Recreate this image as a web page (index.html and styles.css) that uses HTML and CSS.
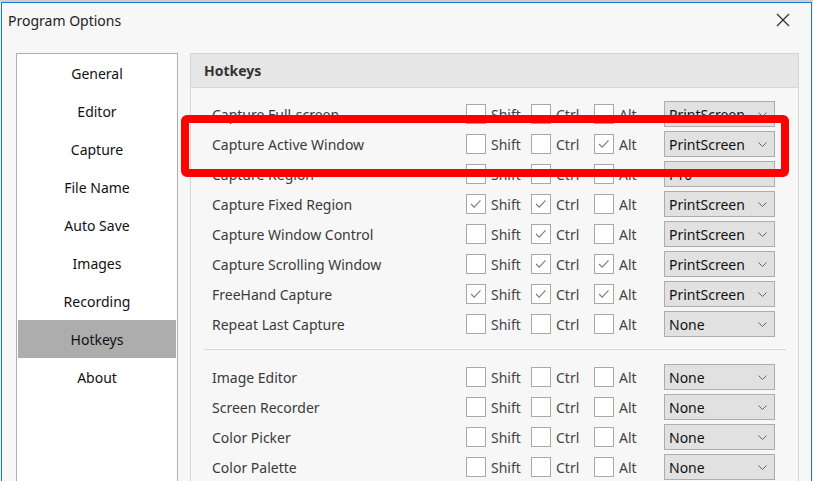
FILE: index.html
```html
<!DOCTYPE html>
<html>
<head>
<meta charset="utf-8">
<link rel="stylesheet" href="styles.css">
</head>
<body>
<div class="strip"></div>
<div class="window">
  <div class="titlebar">
    <span class="title">Program Options</span>
    <svg class="close" width="14" height="14" viewBox="0 0 14 14"><path d="M1 1L13 13M13 1L1 13" stroke="#333" stroke-width="1.3" fill="none"/></svg>
  </div>
  <div class="content">
    <div class="sidebar">
      <div class="nav">General</div>
      <div class="nav">Editor</div>
      <div class="nav">Capture</div>
      <div class="nav">File Name</div>
      <div class="nav">Auto Save</div>
      <div class="nav">Images</div>
      <div class="nav">Recording</div>
      <div class="nav active">Hotkeys</div>
      <div class="nav">About</div>
    </div>
    <div class="panel">
      <div class="panel-head">Hotkeys</div>
      <div class="group">
        <div class="row"><span class="label">Capture Full-screen</span><span class="opt"><i class="box"></i>Shift</span><span class="opt"><i class="box"></i>Ctrl</span><span class="opt"><i class="box"></i>Alt</span><span class="select">PrintScreen<svg class="chev" viewBox="0 0 9 5"><path d="M0.5 0.5L4.5 4.5L8.5 0.5" fill="none" stroke="#666" stroke-width="1"/></svg></span></div>
        <div class="row"><span class="label">Capture Active Window</span><span class="opt"><i class="box"></i>Shift</span><span class="opt"><i class="box"></i>Ctrl</span><span class="opt"><i class="box on"><svg viewBox="0 0 20 20"><path d="M4.5 10L8 13.5L15 6" fill="none" stroke="#7a7a7a" stroke-width="1.2"/></svg></i>Alt</span><span class="select">PrintScreen<svg class="chev" viewBox="0 0 9 5"><path d="M0.5 0.5L4.5 4.5L8.5 0.5" fill="none" stroke="#666" stroke-width="1"/></svg></span></div>
        <div class="row"><span class="label">Capture Region</span><span class="opt"><i class="box"></i>Shift</span><span class="opt"><i class="box"></i>Ctrl</span><span class="opt"><i class="box"></i>Alt</span><span class="select">F10<svg class="chev" viewBox="0 0 9 5"><path d="M0.5 0.5L4.5 4.5L8.5 0.5" fill="none" stroke="#666" stroke-width="1"/></svg></span></div>
        <div class="row"><span class="label">Capture Fixed Region</span><span class="opt"><i class="box"><svg viewBox="0 0 20 20"><path d="M4.5 10L8 13.5L15 6" fill="none" stroke="#7a7a7a" stroke-width="1.2"/></svg></i>Shift</span><span class="opt"><i class="box"><svg viewBox="0 0 20 20"><path d="M4.5 10L8 13.5L15 6" fill="none" stroke="#7a7a7a" stroke-width="1.2"/></svg></i>Ctrl</span><span class="opt"><i class="box"></i>Alt</span><span class="select">PrintScreen<svg class="chev" viewBox="0 0 9 5"><path d="M0.5 0.5L4.5 4.5L8.5 0.5" fill="none" stroke="#666" stroke-width="1"/></svg></span></div>
        <div class="row"><span class="label">Capture Window Control</span><span class="opt"><i class="box"></i>Shift</span><span class="opt"><i class="box"><svg viewBox="0 0 20 20"><path d="M4.5 10L8 13.5L15 6" fill="none" stroke="#7a7a7a" stroke-width="1.2"/></svg></i>Ctrl</span><span class="opt"><i class="box"></i>Alt</span><span class="select">PrintScreen<svg class="chev" viewBox="0 0 9 5"><path d="M0.5 0.5L4.5 4.5L8.5 0.5" fill="none" stroke="#666" stroke-width="1"/></svg></span></div>
        <div class="row"><span class="label">Capture Scrolling Window</span><span class="opt"><i class="box"></i>Shift</span><span class="opt"><i class="box"><svg viewBox="0 0 20 20"><path d="M4.5 10L8 13.5L15 6" fill="none" stroke="#7a7a7a" stroke-width="1.2"/></svg></i>Ctrl</span><span class="opt"><i class="box"><svg viewBox="0 0 20 20"><path d="M4.5 10L8 13.5L15 6" fill="none" stroke="#7a7a7a" stroke-width="1.2"/></svg></i>Alt</span><span class="select">PrintScreen<svg class="chev" viewBox="0 0 9 5"><path d="M0.5 0.5L4.5 4.5L8.5 0.5" fill="none" stroke="#666" stroke-width="1"/></svg></span></div>
        <div class="row"><span class="label">FreeHand Capture</span><span class="opt"><i class="box"><svg viewBox="0 0 20 20"><path d="M4.5 10L8 13.5L15 6" fill="none" stroke="#7a7a7a" stroke-width="1.2"/></svg></i>Shift</span><span class="opt"><i class="box"><svg viewBox="0 0 20 20"><path d="M4.5 10L8 13.5L15 6" fill="none" stroke="#7a7a7a" stroke-width="1.2"/></svg></i>Ctrl</span><span class="opt"><i class="box"><svg viewBox="0 0 20 20"><path d="M4.5 10L8 13.5L15 6" fill="none" stroke="#7a7a7a" stroke-width="1.2"/></svg></i>Alt</span><span class="select">PrintScreen<svg class="chev" viewBox="0 0 9 5"><path d="M0.5 0.5L4.5 4.5L8.5 0.5" fill="none" stroke="#666" stroke-width="1"/></svg></span></div>
        <div class="row"><span class="label">Repeat Last Capture</span><span class="opt"><i class="box"></i>Shift</span><span class="opt"><i class="box"></i>Ctrl</span><span class="opt"><i class="box"></i>Alt</span><span class="select">None<svg class="chev" viewBox="0 0 9 5"><path d="M0.5 0.5L4.5 4.5L8.5 0.5" fill="none" stroke="#666" stroke-width="1"/></svg></span></div>
      </div>
      <div class="sep"></div>
      <div class="group second">
        <div class="row"><span class="label">Image Editor</span><span class="opt"><i class="box"></i>Shift</span><span class="opt"><i class="box"></i>Ctrl</span><span class="opt"><i class="box"></i>Alt</span><span class="select">None<svg class="chev" viewBox="0 0 9 5"><path d="M0.5 0.5L4.5 4.5L8.5 0.5" fill="none" stroke="#666" stroke-width="1"/></svg></span></div>
        <div class="row"><span class="label">Screen Recorder</span><span class="opt"><i class="box"></i>Shift</span><span class="opt"><i class="box"></i>Ctrl</span><span class="opt"><i class="box"></i>Alt</span><span class="select">None<svg class="chev" viewBox="0 0 9 5"><path d="M0.5 0.5L4.5 4.5L8.5 0.5" fill="none" stroke="#666" stroke-width="1"/></svg></span></div>
        <div class="row"><span class="label">Color Picker</span><span class="opt"><i class="box"></i>Shift</span><span class="opt"><i class="box"></i>Ctrl</span><span class="opt"><i class="box"></i>Alt</span><span class="select">None<svg class="chev" viewBox="0 0 9 5"><path d="M0.5 0.5L4.5 4.5L8.5 0.5" fill="none" stroke="#666" stroke-width="1"/></svg></span></div>
        <div class="row"><span class="label">Color Palette</span><span class="opt"><i class="box"></i>Shift</span><span class="opt"><i class="box"></i>Ctrl</span><span class="opt"><i class="box"></i>Alt</span><span class="select">None<svg class="chev" viewBox="0 0 9 5"><path d="M0.5 0.5L4.5 4.5L8.5 0.5" fill="none" stroke="#666" stroke-width="1"/></svg></span></div>
      </div>
    </div>
  </div>
</div>
<div class="highlight"></div>
</body>
</html>
```
FILE: styles.css
```css
html, body {
  margin: 0;
  padding: 0;
  width: 813px;
  height: 481px;
  overflow: hidden;
  background: #f0f0f0;
  font-family: "Noto Sans", "Open Sans", sans-serif;
  position: relative;
}
.strip {
  height: 2px;
  background: #cfcfcf;
}
.window {
  margin-left: 1px;
  width: 809px;
  height: 500px;
  border: 1px solid #1e77cf;
  border-bottom: none;
  background: #f7f7f7;
}
.titlebar {
  height: 34px;
  display: flex;
  align-items: center;
  justify-content: space-between;
  padding: 0 21px 0 6px;
}
.title {
  font-size: 14px;
  color: #222;
}
.close {
  display: block;
}
.content {
  display: flex;
  margin-top: 16px;
  padding-left: 14px;
  gap: 12px;
}
.sidebar {
  width: 158px;
  height: 440px;
  border: 1px solid #adadad;
  background: #fff;
  padding: 0 1px;
}
.nav {
  height: 38px;
  display: flex;
  align-items: center;
  justify-content: center;
  font-size: 14px;
  color: #111;
}
.nav.active {
  background: #adadad;
}
.panel {
  width: 607px;
  height: 440px;
  border: 1px solid #d6d6d6;
}
.panel-head {
  height: 33px;
  background: #e6e6e6;
  border-bottom: 1px solid #d6d6d6;
  display: flex;
  align-items: center;
  padding-left: 13px;
  font-size: 14px;
  font-weight: bold;
  color: #333;
}
.group {
  padding: 11px 0 10px 21px;
}
.group.second {
  padding-top: 12px;
}
.row {
  display: grid;
  grid-template-columns: 254px 65px 63px 70px 111px;
  height: 30px;
  align-items: center;
}
.label {
  font-size: 14px;
  color: #3a3a3a;
}
.opt {
  display: flex;
  align-items: center;
  font-size: 14px;
  color: #444;
}
.box {
  width: 18px;
  height: 18px;
  border: 1px solid #a8a8a8;
  background: #fff;
  margin-right: 5px;
  display: block;
}
.box svg {
  width: 18px;
  height: 18px;
  display: block;
}
.select {
  height: 24px;
  border: 1px solid #adadad;
  background: #e1e1e1;
  display: flex;
  align-items: center;
  justify-content: space-between;
  padding: 0 7px 0 4px;
  font-size: 14px;
  color: #111;
}
.chev {
  width: 9px;
  height: 5px;
  display: block;
}
.sep {
  height: 1px;
  background: #d6d6d6;
  margin: 0 12px 0 13px;
}
.highlight {
  position: absolute;
  left: 181px;
  top: 115px;
  width: 592px;
  height: 46px;
  border: 8px solid #ff0000;
  border-radius: 6px;
}
```
